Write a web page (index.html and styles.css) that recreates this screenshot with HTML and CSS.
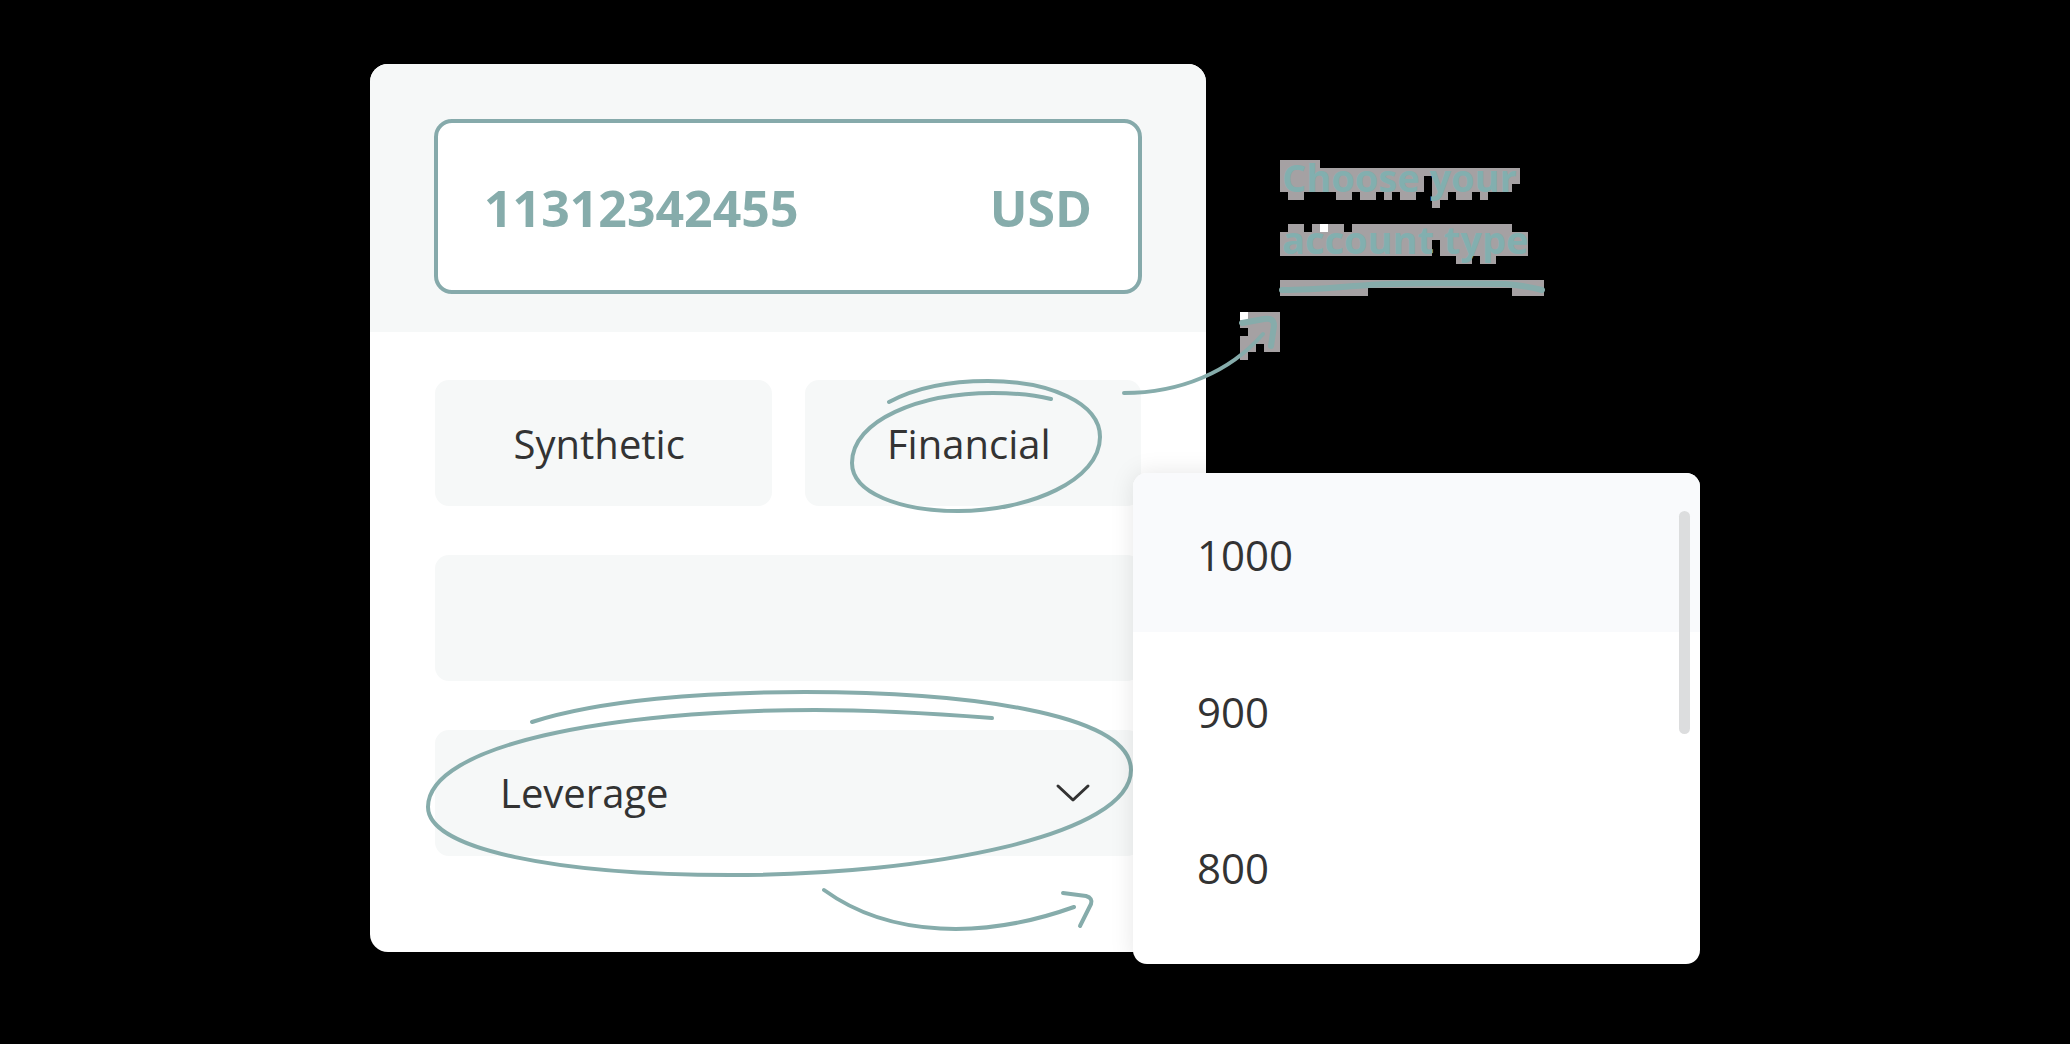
FILE: index.html
```html
<!DOCTYPE html>
<html lang="en">
<head>
<meta charset="utf-8">
<meta name="viewport" content="width=device-width, initial-scale=1">
<title>Choose your account type</title>
<link rel="stylesheet" href="styles.css">
</head>
<body>
<main class="scene">
  <form class="card">
    <div class="card-head">
      <div class="account">
        <input class="account-number" type="text" value="11312342455" aria-label="Account number">
        <span class="currency">USD</span>
      </div>
    </div>
    <div class="card-body">
      <div class="types">
        <button class="field type" type="button">Synthetic</button>
        <button class="field type" type="button">Financial</button>
      </div>
      <input class="field" type="text" aria-label="Account name">
      <button class="field leverage" type="button" aria-haspopup="listbox" aria-expanded="true">
        Leverage
        <svg class="chevron" width="36" height="20" viewBox="0 0 36 20" aria-hidden="true"><path d="M3 3 18 17 33 3"/></svg>
      </button>
    </div>
  </form>

  <svg class="doodles" viewBox="370 64 1330 900" aria-hidden="true">
    <!-- blocky backing of the note, on an 8px grid -->
    <path class="blocks" d="M1280 160h40v8h-40z M1280 168h240v8h-240z M1280 176h144v16h-144z M1432 176h88v8h-88z M1432 184h80v8h-80z M1288 192h16v8h-16z M1336 192h16v8h-16z M1360 192h16v8h-16z M1384 192h8v8h-8z M1400 192h16v8h-16z M1432 192h16v8h-16z M1456 192h16v8h-16z M1480 192h8v8h-8z M1432 200h8v8h-8z"/>
    <path class="blocks" d="M1288 224h16v8h-16z M1312 224h32v8h-32z M1352 224h160v8h-160z M1280 232h248v8h-248z M1280 240h152v16h-152z M1440 240h88v16h-88z M1456 256h16v8h-16z M1480 256h16v8h-16z"/>
    <path class="blocks" d="M1280 280h264v8h-264z M1280 288h88v8h-88z M1512 288h32v8h-32z"/>
    <path class="blocks" d="M1240 312h40v16h-40z M1248 328h32v8h-32z M1240 336h40v8h-40z M1240 344h16v8h-16z M1264 344h16v8h-16z M1240 352h8v8h-8z"/>
    <path class="spark" d="M1320 224h8v8h-8z M1240 312h8v8h-8z"/>
    <g class="strokes">
      <path d="M889 402C915 388 950 381 988 381C1050 381 1100 403 1100 437C1100 480 1030 511 958 511C900 511 852 493 852 463C852 420 920 393 993 393C1015 393 1035 395 1051 399"/>
      <path d="M532 722C600 700 705 692 805 692C960 692 1131 712 1131 770C1131 835 930 875 730 875C560 875 428 850 428 807C428 745 610 710 815 710C880 710 940 714 992 718"/>
      <path d="M824 890C890 938 985 939 1074 907"/>
      <path d="M1063 893 1086 896Q1093 898 1091 904L1080 926"/>
      <path d="M1124 393C1180 393 1230 372 1263 334"/>
      <path class="thick" d="M1242 323 1264 319Q1274 317 1274 326L1271 346"/>
      <path class="thick" d="M1282 290C1310 290 1330 288 1355 286C1400 282 1460 283 1505 284C1520 285 1530 287 1542 290"/>
    </g>
  </svg>

  <aside class="side">
    <p class="note">Choose your<br>account type</p>
    <div class="menu" role="listbox" aria-label="Leverage">
      <button class="option selected" type="button" role="option" aria-selected="true">1000</button>
      <button class="option" type="button" role="option" aria-selected="false">900</button>
      <button class="option" type="button" role="option" aria-selected="false">800</button>
      <span class="thumb"></span>
    </div>
  </aside>
</main>
</body>
</html>
```
FILE: styles.css
```css
* { box-sizing: border-box; }

body {
  margin: 0;
  padding: 64px 32px 80px;
  background: #000;
  color: #333;
  font: 40px/56px "Open Sans", "Noto Sans", sans-serif;
}

button, input { font: inherit; color: inherit; border: 0; margin: 0; }

.scene {
  position: relative;
  display: grid;
  grid-template-columns: 763fr 73fr 494fr;
  align-items: start;
  max-width: 1330px;
  margin: 0 auto;
}

.card {
  grid-area: 1 / 1 / 2 / 3;
  background: #fff;
  border-radius: 18px;
  overflow: hidden;
}

.card-head { padding: 55px 64px 38px; background: #f6f8f8; }

.account {
  display: flex;
  align-items: center;
  justify-content: space-between;
  height: 175px;
  padding: 2px 46px 0;
  border: 4px solid #86aaab;
  border-radius: 18px;
  background: #fff;
  color: #86acab;
  font-size: 50px;
  font-weight: 700;
}

.account-number {
  flex: 1;
  min-width: 0;
  padding: 0;
  background: none;
}

.card-body {
  display: flex;
  flex-direction: column;
  gap: 49px;
  padding: 48px 65px 96px;
}

.types { display: grid; grid-template-columns: 1fr 1fr; gap: 33px; }

.field {
  width: 100%;
  height: 126px;
  padding: 0 50px;
  border-radius: 14px;
  background: #f6f8f8;
}

.type { padding: 2px 54px 0 46px; }

.leverage {
  display: flex;
  align-items: center;
  justify-content: space-between;
  padding-left: 65px;
  text-align: left;
}

.chevron { fill: none; stroke: #333; stroke-width: 3; stroke-linecap: round; stroke-linejoin: round; }

.doodles { position: absolute; top: 0; left: 0; width: 100%; }
.blocks { fill: #a5a1a3; shape-rendering: crispEdges; }
.spark { fill: #fff; }
.strokes { fill: none; stroke: #86acab; stroke-width: 4; stroke-linecap: round; stroke-linejoin: round; }
.thick { stroke-width: 6; }

.side { grid-area: 1 / 2 / 2 / 4; position: relative; }

.note {
  height: 409px;
  margin: 0;
  padding: 82px 0 0 149px;
  color: #82afaf;
  font-size: 38px;
  font-weight: 700;
  line-height: 62px;
}

.menu {
  position: relative;
  padding-bottom: 20px;
  border-radius: 14px;
  background: #fff;
  box-shadow: 0 0 24px rgba(0, 0, 0, 0.1);
  overflow: hidden;
}

.option {
  display: block;
  width: 100%;
  height: 156px;
  padding: 4px 64px 0;
  background: none;
  font-size: 42px;
  text-align: left;
}

.selected { height: 159px; background: #f9fafc; }

.thumb {
  position: absolute;
  top: 38px;
  right: 10px;
  width: 11px;
  height: 223px;
  border-radius: 6px;
  background: #dcddde;
}
```
